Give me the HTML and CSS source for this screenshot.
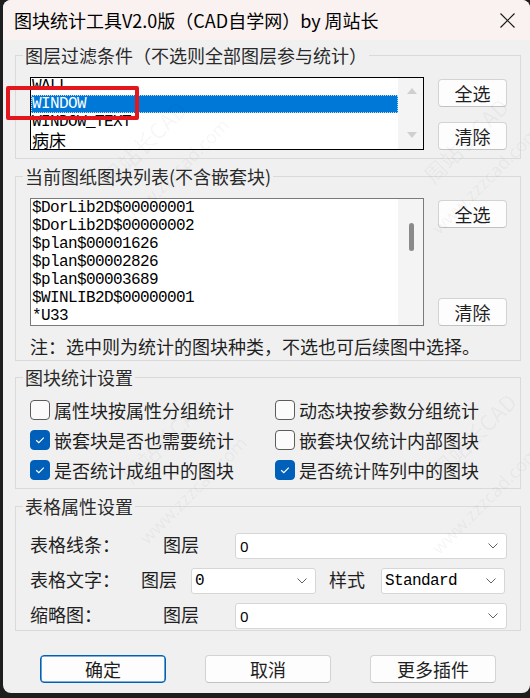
FILE: index.html
```html
<!DOCTYPE html>
<html lang="zh-CN">
<head>
<meta charset="utf-8">
<title>图块统计工具V2.0版</title>
<link rel="stylesheet" href="styles.css">
</head>
<body>
<div class="window">
  <div class="titlebar">
    <span class="title">图块统计工具V2.0版（CAD自学网）by 周站长</span>
    <svg class="close" viewBox="0 0 15 15" width="15" height="15"><path d="M0.5 0.5 L14.5 14.5 M14.5 0.5 L0.5 14.5" stroke="#1a1a1a" stroke-width="1.2" fill="none"/></svg>
  </div>

  <div class="body">
    <section class="group g1">
      <div class="group-title">图层过滤条件（不选则全部图层参与统计）</div>
      <div class="list-row">
        <div class="listbox focused short">
          <div class="list-items">
            <div class="item first">WALL</div>
            <div class="item selected">WINDOW</div>
            <div class="item">WINDOW_TEXT</div>
            <div class="item cjk">病床</div>
          </div>
          <div class="vscroll arrows">
            <svg width="10" height="6" viewBox="0 0 10 6"><path d="M0 6 L5 0 L10 6 Z" fill="#cfcfcf"/></svg>
            <svg width="10" height="6" viewBox="0 0 10 6"><path d="M0 0 L5 6 L10 0 Z" fill="#cfcfcf"/></svg>
          </div>
        </div>
        <div class="btn-col tight">
          <button class="btn">全选</button>
          <button class="btn">清除</button>
        </div>
      </div>
    </section>

    <section class="group g2">
      <div class="group-title">当前图纸图块列表(不含嵌套块)</div>
      <div class="list-row">
        <div class="listbox tall">
          <div class="list-items">
            <div class="item">$DorLib2D$00000001</div>
            <div class="item">$DorLib2D$00000002</div>
            <div class="item">$plan$00001626</div>
            <div class="item">$plan$00002826</div>
            <div class="item">$plan$00003689</div>
            <div class="item">$WINLIB2D$00000001</div>
            <div class="item">*U33</div>
          </div>
          <div class="vscroll"><span class="thumb"></span></div>
        </div>
        <div class="btn-col spread">
          <button class="btn">全选</button>
          <button class="btn">清除</button>
        </div>
      </div>
      <p class="note">注：选中则为统计的图块种类，不选也可后续图中选择。</p>
    </section>

    <section class="group g3">
      <div class="group-title">图块统计设置</div>
      <div class="checks">
        <label class="check"><span class="box"></span>属性块按属性分组统计</label>
        <label class="check"><span class="box"></span>动态块按参数分组统计</label>
        <label class="check"><span class="box on"><svg viewBox="0 0 20 20" width="20" height="20"><path d="M6.2 10.2 L8.8 12.7 L13.8 7.6" stroke="#fff" stroke-width="1.2" fill="none"/></svg></span>嵌套块是否也需要统计</label>
        <label class="check"><span class="box"></span>嵌套块仅统计内部图块</label>
        <label class="check"><span class="box on"><svg viewBox="0 0 20 20" width="20" height="20"><path d="M6.2 10.2 L8.8 12.7 L13.8 7.6" stroke="#fff" stroke-width="1.2" fill="none"/></svg></span>是否统计成组中的图块</label>
        <label class="check"><span class="box on"><svg viewBox="0 0 20 20" width="20" height="20"><path d="M6.2 10.2 L8.8 12.7 L13.8 7.6" stroke="#fff" stroke-width="1.2" fill="none"/></svg></span>是否统计阵列中的图块</label>
      </div>
    </section>

    <section class="group g4">
      <div class="group-title">表格属性设置</div>
      <div class="prop-row first">
        <span class="lbl main-wide">表格线条：</span>
        <span class="lbl layer-wide">图层</span>
        <div class="select wide"><span class="val sans">0</span><svg class="chev" width="10" height="6" viewBox="0 0 10 6"><path d="M0.5 0.5 L5 5 L9.5 0.5" stroke="#606060" stroke-width="1" fill="none"/></svg></div>
      </div>
      <div class="prop-row">
        <span class="lbl main-narrow">表格文字：</span>
        <span class="lbl layer-narrow">图层</span>
        <div class="select mid"><span class="val mono">0</span><svg class="chev" width="10" height="6" viewBox="0 0 10 6"><path d="M0.5 0.5 L5 5 L9.5 0.5" stroke="#606060" stroke-width="1" fill="none"/></svg></div>
        <span class="lbl style">样式</span>
        <div class="select mid2"><span class="val mono">Standard</span><svg class="chev" width="10" height="6" viewBox="0 0 10 6"><path d="M0.5 0.5 L5 5 L9.5 0.5" stroke="#606060" stroke-width="1" fill="none"/></svg></div>
      </div>
      <div class="prop-row">
        <span class="lbl main-wide">缩略图：</span>
        <span class="lbl layer-wide">图层</span>
        <div class="select wide"><span class="val sans">0</span><svg class="chev" width="10" height="6" viewBox="0 0 10 6"><path d="M0.5 0.5 L5 5 L9.5 0.5" stroke="#606060" stroke-width="1" fill="none"/></svg></div>
      </div>
    </section>

    <div class="footer">
      <button class="btn big default">确定</button>
      <button class="btn big">取消</button>
      <button class="btn big">更多插件</button>
    </div>
  </div>

  <div class="watermarks" aria-hidden="true">
    <span class="wm" style="left:140px;top:143px">周站长CAD</span>
    <span class="wm url" style="left:172px;top:172px">www.zzzcad.com</span>
    <span class="wm" style="left:462px;top:140px">周站长CAD</span>
    <span class="wm url" style="left:482px;top:180px">www.zzzcad.com</span>
    <span class="wm" style="left:160px;top:440px">周站长CAD</span>
    <span class="wm url" style="left:190px;top:490px">www.zzzcad.com</span>
    <span class="wm" style="left:470px;top:435px">周站长CAD</span>
    <span class="wm url" style="left:482px;top:500px">www.zzzcad.com</span>
  </div>

  <div class="annotation"></div>
</div>
</body>
</html>
```

FILE: styles.css
```css
* { box-sizing: border-box; }

body {
  margin: 0;
  width: 530px;
  height: 698px;
  overflow: hidden;
  background: #1e1e1e;
}

.window {
  position: relative;
  margin-left: 3px;
  width: 527px;
  height: 693px;
  background: #f0f0f0;
  border-radius: 8px;
  overflow: hidden;
  font-family: "Noto Sans CJK SC", "Noto Sans", sans-serif;
  color: #1f1f1f;
}

.titlebar {
  height: 40px;
  background: #f9f2f0;
  display: flex;
  align-items: center;
  padding: 0 15px 0 11px;
}

.title {
  flex: 1;
  font-size: 18px;
  line-height: 24px;
  color: #000;
  white-space: nowrap;
}

.close { display: block; }

.body {
  padding: 15px 9px 0 12px;
}

.group {
  border: 1px solid #dadada;
  padding: 0 13px 0 14px;
}

.group-title {
  width: fit-content;
  margin: -11px 0 0 -7px;
  padding: 0 2px;
  background: #f0f0f0;
  font-size: 18px;
  line-height: 20px;
  color: #2a2a2a;
  white-space: nowrap;
  position: relative;
}

.g1 { padding-bottom: 8px; }
.g2 { margin-top: 17px; padding-bottom: 4px; }
.g3 { margin-top: 16px; padding-bottom: 3px; }
.g4 { margin-top: 17px; padding-bottom: 1px; }

.list-row {
  display: flex;
  gap: 14px;
  margin-top: 12px;
}

.listbox {
  width: 394px;
  display: flex;
  background: #fff;
  border: 1px solid #7a7a7a;
  overflow: hidden;
}
.listbox.focused { border-color: #000; }
.listbox.short { height: 73px; }
.listbox.tall { height: 128px; }

.list-items {
  flex: 1;
  overflow: hidden;
  font-family: "Liberation Mono", monospace;
  font-size: 16px;
  letter-spacing: -0.6px;
  color: #000;
}

.item {
  height: 18px;
  line-height: 18px;
  padding-left: 1px;
  white-space: nowrap;
}
.item.first { margin-top: -1px; }
.item.cjk {
  font-family: "Noto Sans CJK SC", sans-serif;
  font-size: 17px;
  letter-spacing: 0;
}
.item.selected {
  background: #0078d7;
  color: #fff;
  outline: 1px dotted rgba(255, 255, 255, 0.75);
  outline-offset: -1px;
}

.vscroll {
  width: 25px;
  background: #f4f4f4;
  position: relative;
}
.vscroll.arrows {
  display: flex;
  flex-direction: column;
  justify-content: space-between;
  align-items: center;
  padding: 10px 0 11px 3px;
}
.thumb {
  position: absolute;
  left: 11px;
  top: 24px;
  width: 5px;
  height: 28px;
  border-radius: 3px;
  background: #8a8a8a;
}

.btn-col {
  display: flex;
  flex-direction: column;
}
.btn-col.tight { padding-top: 2px; gap: 15px; }
.btn-col.spread { padding-top: 2px; justify-content: space-between; }

.btn {
  width: 69px;
  height: 28px;
  padding: 0;
  border: 1px solid #d3d3d3;
  border-bottom-color: #c2c2c2;
  border-radius: 4px;
  background: #fdfdfd;
  font-family: "Noto Sans CJK SC", sans-serif;
  font-size: 18px;
  line-height: 26px;
  color: #1f1f1f;
}

.note {
  margin: 10px 0 0;
  font-size: 18px;
  line-height: 20px;
  color: #1f1f1f;
  white-space: nowrap;
}

.checks {
  margin-top: 8px;
  display: grid;
  grid-template-columns: 245px 1fr;
  grid-auto-rows: 30px;
}

.check {
  display: flex;
  align-items: center;
  gap: 4px;
  font-size: 18px;
  line-height: 20px;
  white-space: nowrap;
}

.box {
  width: 20px;
  height: 20px;
  border: 1px solid #5c5c5c;
  border-radius: 4px;
  background: #fbfbfb;
  flex: none;
  position: relative;
}
.box.on {
  background: #005fb8;
  border-color: #005fb8;
}
.box svg {
  position: absolute;
  left: -1px;
  top: -1px;
}

.prop-row {
  display: flex;
  align-items: center;
  height: 26px;
}
.prop-row.first { margin-top: 17px; }
.prop-row + .prop-row { margin-top: 9px; }

.lbl {
  font-size: 18px;
  line-height: 20px;
  white-space: nowrap;
  flex: none;
  margin-top: -4px;
}
.main-wide { width: 133px; }
.layer-wide { width: 72px; }
.main-narrow { width: 111px; }
.layer-narrow { width: 50px; }
.style { width: 52px; margin-left: 13px; }

.select {
  height: 26px;
  display: flex;
  align-items: center;
  border: 1px solid #d6d6d6;
  border-radius: 3px;
  background: #fff;
  padding-left: 3px;
  flex: none;
}
.select.wide { width: 272px; padding-left: 4px; }
.select.mid { width: 125px; }
.select.mid2 { width: 124px; }

.val { color: #000; }
.val.sans {
  font-family: "Noto Sans", sans-serif;
  font-size: 15px;
}
.val.mono {
  font-family: "Liberation Mono", monospace;
  font-size: 16px;
  letter-spacing: -0.6px;
}

.chev {
  margin-left: auto;
  margin-right: 8px;
}

.footer {
  margin-top: 24px;
  padding-left: 25px;
  display: flex;
  gap: 39px;
}
.btn.big {
  width: 126px;
  height: 28px;
}
.btn.default {
  border-color: #0060b5;
  box-shadow: inset 0 0 0 0.6px #0060b5;
}

.watermarks {
  position: absolute;
  inset: 0;
  pointer-events: none;
}
.wm {
  position: absolute;
  transform: translate(-50%, -50%) rotate(-45deg);
  font-family: "Noto Sans CJK SC", sans-serif;
  font-size: 22px;
  line-height: 24px;
  color: rgba(0, 0, 0, 0.05);
  white-space: nowrap;
}
.wm.url {
  font-family: "Noto Sans", sans-serif;
  font-size: 18px;
}

.annotation {
  position: absolute;
  left: 3px;
  top: 86px;
  width: 133px;
  height: 34px;
  border: 4px solid #e3161d;
  border-radius: 2px;
}
```
